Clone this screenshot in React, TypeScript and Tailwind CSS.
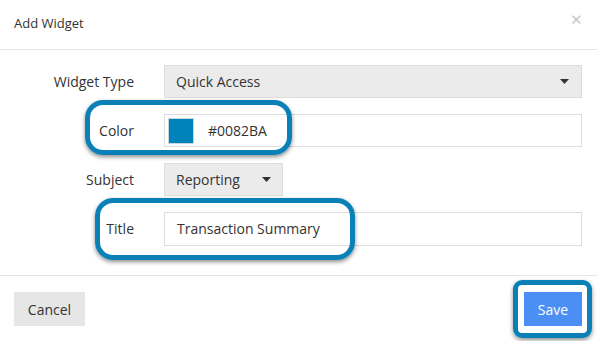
import React from 'react';

function Caret() {
  return (
    <svg width="9" height="5" viewBox="0 0 9 5" className="shrink-0">
      <path d="M0 0h9L4.5 5z" fill="#333" />
    </svg>
  );
}

function Row({ label, children }: { label: string; children: React.ReactNode }) {
  return (
    <div className="flex items-center h-[33px]">
      <div className="w-[119px] text-right text-[14px] text-[#333]">{label}</div>
      <div className="ml-[30px] flex-1 flex">{children}</div>
    </div>
  );
}

export default function App() {
  return (
    <div
      className="relative w-[597px] h-[341px] bg-white text-[#333] overflow-hidden"
      style={{ fontFamily: '"Open Sans", "Noto Sans", sans-serif' }}
    >
      {/* header */}
      <div className="flex items-center justify-between h-[50px] px-[14px] border-b border-[#e5e5e5]">
        <span className="text-[13px] -mt-[2px]">Add Widget</span>
        <span className="text-[#c8c8c8] text-[15px] leading-none -mt-[10px]">✕</span>
      </div>

      {/* body */}
      <div className="flex flex-col gap-[16px] px-[15px] pt-[15px] pb-[30px]">
        <Row label="Widget Type">
          <div className="flex-1 h-[33px] flex items-center justify-between pl-[11px] pr-[12px] bg-[#ebebeb] border border-[#dddddd] text-[14px]">
            <span>Quick Access</span>
            <Caret />
          </div>
        </Row>
        <Row label="Color">
          <div className="flex-1 h-[33px] flex items-center pl-[3px] bg-white border border-[#dddddd] text-[14px]">
            <span className="w-[26px] h-[26px] bg-[#0082BA] border border-[#c9d6dc]" />
            <span className="ml-[14px]">#0082BA</span>
          </div>
        </Row>
        <Row label="Subject">
          <div className="w-[119px] h-[33px] flex items-center justify-between pl-[11px] pr-[11px] bg-[#ebebeb] border border-[#dddddd] text-[14px]">
            <span>Reporting</span>
            <Caret />
          </div>
        </Row>
        <Row label="Title">
          <div className="flex-1 h-[34px] flex items-center pl-[12px] bg-white border border-[#dddddd] text-[14px]">
            <span>Transaction Summary</span>
          </div>
        </Row>
      </div>

      {/* footer */}
      <div className="flex items-center justify-between border-t border-[#e5e5e5] pt-[16px] px-[14px] pr-[15px]">
        <button className="w-[71px] h-[34px] bg-[#e6e6e6] text-[14px] text-[#333]">Cancel</button>
        <button className="w-[58px] h-[34px] bg-[#4b8ff5] text-[14px] text-white">Save</button>
      </div>

      {/* highlight rings */}
      <div className="pointer-events-none absolute left-[85px] top-[100px] w-[207px] h-[55px] rounded-[18px] border-[5px] border-[#0a80b6] shadow-[0_2px_4px_rgba(0,0,0,0.45)]" />
      <div className="pointer-events-none absolute left-[95px] top-[198px] w-[260px] h-[62px] rounded-[18px] border-[5px] border-[#0a80b6] shadow-[0_2px_4px_rgba(0,0,0,0.45)]" />
      <div className="pointer-events-none absolute left-[513px] top-[280px] w-[79px] h-[58px] rounded-[9px] border-[5px] border-[#0a80b6] shadow-[0_2px_4px_rgba(0,0,0,0.45)]" />
    </div>
  );
}
